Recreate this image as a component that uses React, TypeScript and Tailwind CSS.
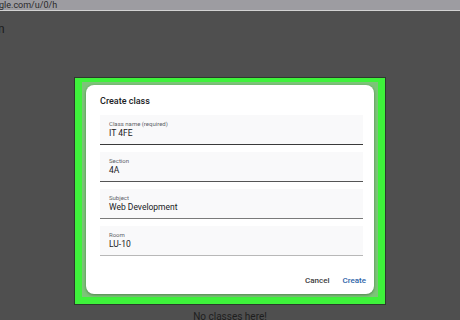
const FIELDS = [
  { label: "Class name (required)", value: "IT 4FE", line: "border-[#3a3a3a]" },
  { label: "Section", value: "4A", line: "border-[#555555]" },
  { label: "Subject", value: "Web Development", line: "border-[#7a7a7a]" },
  { label: "Room", value: "LU-10", line: "border-[#b8b8b8]" },
];

export default function App() {
  return (
    <div
      className="w-[460px] h-[320px] overflow-hidden bg-[#4f4f4f]"
      style={{ fontFamily: "Roboto, 'Liberation Sans', sans-serif" }}
    >
      {/* ── Browser address bar ── */}
      <div className="h-[10px] bg-[#9d9ca1] flex items-center overflow-hidden">
        <span className="text-[9px] leading-[10px] text-[#2a2a2a] -ml-[1px]">
          gle.com/u/0/h
        </span>
      </div>
      <div className="h-[1px] bg-[#d2d2d2]" />

      {/* ── Page body ── */}
      <div className="pt-[10px] flex flex-col">
        <span className="text-[12px] leading-[16px] text-[#1c1c1c] -ml-[2px]">n</span>

        {/* Highlight frame */}
        <div className="mt-[40px] mx-auto w-[312px] border border-[#2c3a2c] bg-[#3ef23b] pt-[4px] px-[7px] pb-[7px]">
          <div className="bg-[#7cc478] p-[3px] px-[4px]">
            {/* Dialog */}
            <div className="bg-white rounded-[8px] pt-[10px] pb-[7px] pl-[14px] pr-[11px] shadow-[0_1px_3px_rgba(0,0,0,0.35)]">
              <div className="text-[9px] leading-[12px] font-medium text-[#202124] mb-[8px]">
                Create class
              </div>

              <div className="flex flex-col gap-[7px]">
                {FIELDS.map((f) => (
                  <div
                    key={f.label}
                    className={`h-[30px] bg-[#f9f9fa] border-b ${f.line} pt-[5px] pl-[9px]`}
                  >
                    <div className="text-[6px] leading-[8px] text-[#5f6368]">{f.label}</div>
                    <div className="text-[8.5px] leading-[11px] mt-[0px] text-[#202124]">
                      {f.value}
                    </div>
                  </div>
                ))}
              </div>

              <div className="mt-[19px] flex justify-end items-center gap-[13px]">
                <button className="text-[8px] leading-[12px] font-medium text-[#3c3c3c]">
                  Cancel
                </button>
                <button className="text-[8px] leading-[12px] font-medium text-[#2c63a8] -mr-[3px]">
                  Create
                </button>
              </div>
            </div>
          </div>
        </div>

        <div className="mt-[6px] text-center text-[10px] leading-[12px] text-[#1e1e1e]">
          No classes here!
        </div>
      </div>
    </div>
  );
}
